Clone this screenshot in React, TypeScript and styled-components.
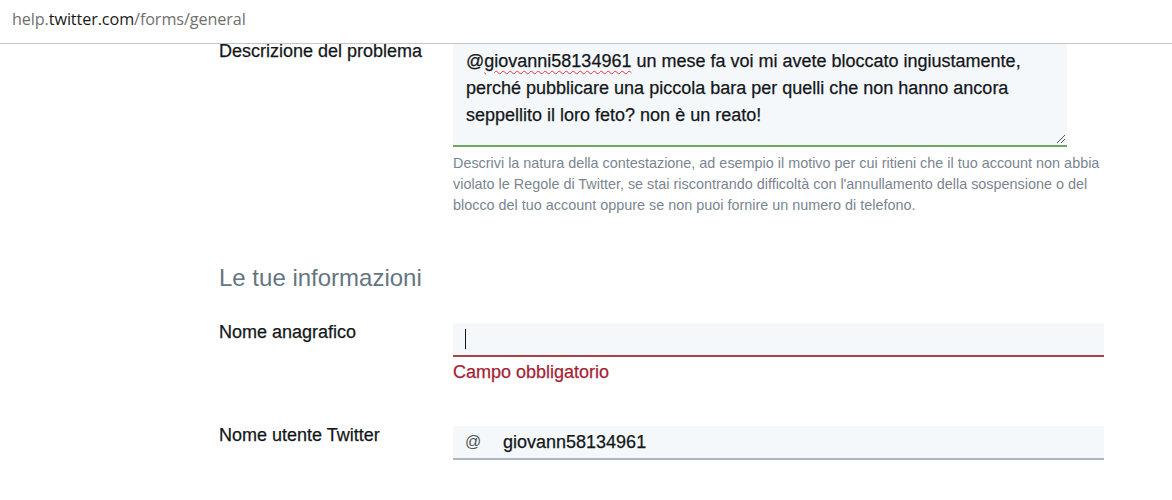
import React from "react";
import styled, { createGlobalStyle } from "styled-components";

const GlobalStyle = createGlobalStyle`
  html, body { margin: 0; padding: 0; background: #ffffff; }
  body { font-family: "Liberation Sans", Arial, sans-serif; }
  * { box-sizing: border-box; }
`;

const Page = styled.div`
  width: 1172px;
  height: 500px;
  display: flex;
  flex-direction: column;
  overflow: hidden;
  background: #ffffff;
`;

const UrlBar = styled.div`
  height: 44px;
  flex: none;
  display: flex;
  align-items: center;
  padding: 0 0 5px 12px;
  border-bottom: 1px solid #c6c6c6;
  font-family: "Open Sans", "Noto Sans", sans-serif;
  font-size: 16.2px;
  color: #6f6f6f;
  letter-spacing: -0.1px;
`;

const Host = styled.span`
  color: #1a1a1a;
`;

const Viewport = styled.div`
  flex: 1;
  overflow: hidden;
`;

const Form = styled.div`
  margin-top: -2px;
  padding-left: 219px;
  width: 1104px;
  box-sizing: content-box;
  display: flex;
  flex-direction: column;
`;

const Row = styled.div<{ $gap?: number }>`
  display: grid;
  grid-template-columns: 234px 1fr;
  align-items: start;
  margin-bottom: ${(p) => p.$gap ?? 0}px;
`;

const Label = styled.div`
  font-size: 18px;
  line-height: 18px;
  color: #14171a;
  -webkit-text-stroke: 0.25px #14171a;
`;

const Field = styled.div`
  display: flex;
  flex-direction: column;
  width: 651px;
`;

const TextBox = styled.div`
  position: relative;
  width: 614px;
  background: #f5f8fa;
  border-bottom: 2px solid #6eaa62;
  padding: 6px 20px 16px 13px;
  font-size: 18px;
  line-height: 27px;
  color: #14171a;
  -webkit-text-stroke: 0.25px #14171a;
`;

const Misspelled = styled.span`
  text-decoration: underline wavy #e0383e;
  text-decoration-thickness: 1px;
  text-underline-offset: 3px;
`;

const Grip = styled.svg`
  position: absolute;
  right: 1px;
  bottom: 1px;
`;

const Help = styled.p`
  margin: 6px 0 0;
  width: 648px;
  font-size: 14.4px;
  line-height: 21px;
  color: #7b8590;
`;

const SectionTitle = styled.h2`
  margin: 0;
  font-weight: 400;
  font-size: 24px;
  line-height: 30px;
  color: #66757f;
  white-space: nowrap;
`;

const InputBox = styled.div<{ $error?: boolean }>`
  height: 34px;
  background: #f5f8fa;
  border-bottom: 2px solid ${(p) => (p.$error ? "#a5424a" : "#aab8c2")};
  display: flex;
  align-items: center;
  padding-left: 12px;
  font-size: 18px;
  color: #14171a;
  -webkit-text-stroke: 0.25px #14171a;
`;

const Caret = styled.span`
  width: 1px;
  height: 20px;
  background: #14171a;
`;

const AtSign = styled.span`
  font-size: 16px;
  color: #4a5258;
  -webkit-text-stroke: 0;
  width: 38px;
`;

const ErrorText = styled.div`
  margin-top: 5px;
  font-size: 18px;
  line-height: 20px;
  color: #a51e37;
  -webkit-text-stroke: 0.25px #a51e37;
`;

export default function App() {
  return (
    <Page>
      <GlobalStyle />
      <UrlBar>
        help.<Host>twitter.com</Host>/forms/general
      </UrlBar>
      <Viewport>
        <Form>
          <Row $gap={47}>
            <Label>Descrizione del problema</Label>
            <Field>
              <TextBox>
                @<Misspelled>giovanni58134961</Misspelled> un mese fa voi mi avete bloccato ingiustamente,
                perché pubblicare una piccola bara per quelli che non hanno ancora seppellito il loro feto? non è
                un reato!
                <Grip width="10" height="10" viewBox="0 0 10 10">
                  <line x1="9" y1="1" x2="1" y2="9" stroke="#555" strokeWidth="1" />
                  <line x1="9" y1="5" x2="5" y2="9" stroke="#555" strokeWidth="1" />
                </Grip>
              </TextBox>
              <Help>
                Descrivi la natura della contestazione, ad esempio il motivo per cui ritieni che il tuo account non
                abbia violato le Regole di Twitter, se stai riscontrando difficoltà con l'annullamento della
                sospensione o del blocco del tuo account oppure se non puoi fornire un numero di telefono.
              </Help>
            </Field>
          </Row>
          <Row $gap={30}>
            <SectionTitle>Le tue informazioni</SectionTitle>
          </Row>
          <Row $gap={44}>
            <Label>Nome anagrafico</Label>
            <Field>
              <InputBox $error>
                <Caret />
              </InputBox>
              <ErrorText>Campo obbligatorio</ErrorText>
            </Field>
          </Row>
          <Row>
            <Label>Nome utente Twitter</Label>
            <Field>
              <InputBox>
                <AtSign>@</AtSign>
                giovann58134961
              </InputBox>
            </Field>
          </Row>
        </Form>
      </Viewport>
    </Page>
  );
}
